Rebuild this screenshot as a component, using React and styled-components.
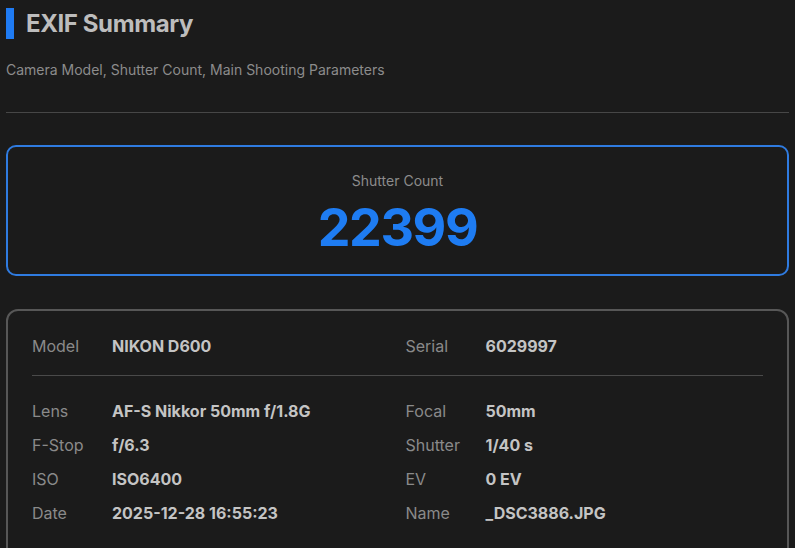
import React from "react";
import styled, { createGlobalStyle } from "styled-components";

const Global = createGlobalStyle`
  html, body { margin: 0; padding: 0; background: #1b1b1b; }
  body { font-family: Inter, "Noto Sans", sans-serif; color: #c8c8c8; }
`;

const Page = styled.div`
  padding: 8px 6px 0 6px;
  height: 540px;
  overflow: hidden;
`;

const Header = styled.div`
  display: flex;
  align-items: center;
  gap: 12px;
`;

const Bar = styled.div`
  width: 8px;
  height: 31px;
  background: #1f7bf3;
`;

const Title = styled.h1`
  margin: 0;
  font-size: 24px;
  line-height: 31px;
  font-weight: 700;
  color: #bdbdbd;
  letter-spacing: -0.4px;
`;

const Subtitle = styled.p`
  margin: 22px 0 0 0;
  font-size: 14px;
  line-height: 18px;
  color: #8c8c8c;
`;

const Divider = styled.hr`
  margin: ${(p) => p.$mt || 0}px 0 0 0;
  border: none;
  height: 1px;
  background: ${(p) => p.$color || "#474747"};
`;

const CountCard = styled.div`
  margin-top: 32px;
  height: 131px;
  box-sizing: border-box;
  border: 2px solid #2f7be0;
  border-radius: 10px;
  display: flex;
  flex-direction: column;
  align-items: center;
  justify-content: center;
`;

const CountLabel = styled.div`
  font-size: 14px;
  line-height: 18px;
  color: #8c8c8c;
  margin-top: 6px;
`;

const CountValue = styled.div`
  font-size: 52px;
  line-height: 56px;
  font-weight: 700;
  color: #1e7cf2;
  margin-top: 10px;
  letter-spacing: -1.4px;
`;

const InfoCard = styled.div`
  margin-top: 33px;
  box-sizing: border-box;
  border: 2px solid #575757;
  border-radius: 12px;
  padding: 18px 24px 30px 24px;
`;

const Grid = styled.div`
  display: grid;
  grid-template-columns: 1fr 1fr;
  column-gap: 16px;
  margin-top: ${(p) => p.$mt || 0}px;
`;

const Item = styled.div`
  display: flex;
  align-items: center;
  height: 34px;
  font-size: 16px;
`;

const Label = styled.span`
  width: 80px;
  flex: none;
  color: #8a8a8a;
`;

const Value = styled.span`
  font-weight: 700;
  color: #c4c4c4;
`;

const Row = ({ l, v }) => (
  <Item>
    <Label>{l}</Label>
    <Value>{v}</Value>
  </Item>
);

export default function App() {
  return (
    <>
      <Global />
      <Page>
        <Header>
          <Bar />
          <Title>EXIF Summary</Title>
        </Header>
        <Subtitle>Camera Model, Shutter Count, Main Shooting Parameters</Subtitle>
        <Divider $mt={33} />
        <CountCard>
          <CountLabel>Shutter Count</CountLabel>
          <CountValue>22399</CountValue>
        </CountCard>
        <InfoCard>
          <Grid>
            <Row l="Model" v="NIKON D600" />
            <Row l="Serial" v="6029997" />
          </Grid>
          <Divider $mt={12} $color="#4a4a4a" />
          <Grid $mt={18}>
            <Row l="Lens" v="AF-S Nikkor 50mm f/1.8G" />
            <Row l="Focal" v="50mm" />
            <Row l="F-Stop" v="f/6.3" />
            <Row l="Shutter" v="1/40 s" />
            <Row l="ISO" v="ISO6400" />
            <Row l="EV" v="0 EV" />
            <Row l="Date" v="2025-12-28 16:55:23" />
            <Row l="Name" v="_DSC3886.JPG" />
          </Grid>
        </InfoCard>
      </Page>
    </>
  );
}
